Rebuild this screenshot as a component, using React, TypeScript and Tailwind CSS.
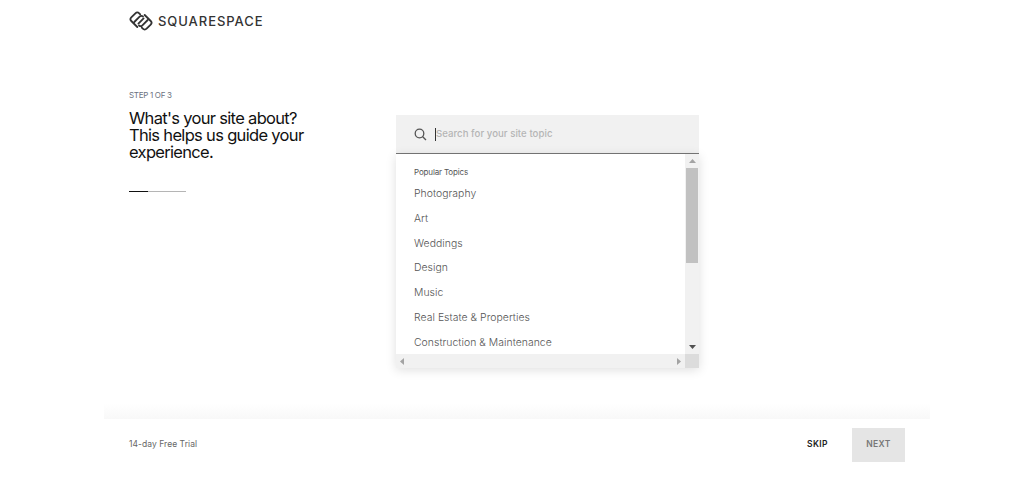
const topics = ["Photography", "Art", "Weddings", "Design", "Music", "Real Estate & Properties", "Construction & Maintenance"];

function LogoHalf() {
  return (
    <>
      <path d="M8.3 16 L2.3 10 C1.2 8.9 1.2 7.5 2.3 6.4 L6.4 2.3 C7.6 1.1 9 1.1 10.2 2.3 L11.2 3.3" />
      <path d="M5.3 11 L10.6 5.7 C11.6 4.7 12.9 4.6 14 5.5" />
    </>
  );
}

function Logo() {
  return (
    <svg width="24" height="20" viewBox="0 0 24 20" fill="none" stroke="#333333" strokeWidth="1.8" strokeLinecap="round" strokeLinejoin="round">
      <LogoHalf />
      <g transform="rotate(180 12 10)">
        <LogoHalf />
      </g>
      <path d="M9.4 12.6 L14.6 7.4" />
    </svg>
  );
}

export default function App() {
  return (
    <div className="w-[1032px] h-[495px] bg-white overflow-hidden font-['Inter',sans-serif]">
      <div className="ml-[104px] w-[826px] h-full flex flex-col">
        <header className="h-[44px] shrink-0 pl-[25px] pt-[11px] flex items-start gap-[5px]">
          <Logo />
          <span className="text-[13px] leading-[20px] font-medium tracking-[0.95px] text-[#333]">SQUARESPACE</span>
        </header>

        <main className="h-[360px] shrink-0 flex">
          <section className="w-[292px] pl-[25px] pt-[45px]">
            <p className="text-[8px] leading-[12px] text-[#6b7280] tracking-[-0.3px]">STEP 1 OF 3</p>
            <h1 className="mt-[9px] w-[190px] text-[16.5px] leading-[17px] text-[#111] tracking-[-0.68px]">
              What's your site about? This helps us guide your experience.
            </h1>
            <div className="mt-[30px] flex w-[57px] h-px">
              <div className="w-[19px] bg-[#111]" />
              <div className="w-[38px] bg-[#b5b5b5]" />
            </div>
          </section>

          <section className="w-[303px] mt-[71px]">
            <div className="h-[39px] bg-[#f1f1f1] border-b border-[#777] pl-[18px] flex items-center">
              <svg width="13" height="13" viewBox="0 0 13 13" fill="none" stroke="#555" strokeWidth="1.3">
                <circle cx="5.5" cy="5.5" r="4.3" />
                <path d="M8.7 8.7 L12 12" />
              </svg>
              <span className="ml-[8px] w-px h-[13px] bg-[#333]" />
              <span className="text-[9.6px] font-medium text-[#b5b5b5] tracking-[0.05px]">Search for your site topic</span>
            </div>
            <div className="h-[214px] flex flex-col shadow-[0_2px_10px_rgba(0,0,0,0.13)] bg-white">
              <div className="flex-1 flex min-h-0">
                <div className="w-[289px] pl-[18px] pt-[12px] overflow-hidden">
                  <p className="text-[8px] leading-[12px] text-[#555] tracking-[-0.15px]">Popular Topics</p>
                  <ul className="mt-[4px]">
                    {topics.map((t) => (
                      <li key={t} className="h-[24.75px] flex items-center pb-[1px] text-[10.4px] font-light text-[#555] tracking-[0.05px]">{t}</li>
                    ))}
                  </ul>
                </div>
                <div className="w-[14px] bg-[#f1f1f1] flex flex-col items-center">
                  <div className="h-[14px] shrink-0 flex items-center justify-center">
                    <svg width="7" height="4" viewBox="0 0 7 4"><path d="M3.5 0 L7 4 H0 Z" fill="#a3a3a3" /></svg>
                  </div>
                  <div className="w-[12px] h-[95px] bg-[#c1c1c1]" />
                  <div className="flex-1" />
                  <div className="h-[14px] shrink-0 flex items-center justify-center">
                    <svg width="7" height="4" viewBox="0 0 7 4"><path d="M0 0 H7 L3.5 4 Z" fill="#505050" /></svg>
                  </div>
                </div>
              </div>
              <div className="h-[14px] shrink-0 flex">
                <div className="w-[289px] bg-[#f1f1f1] flex items-center justify-between px-[4px]">
                  <svg width="4" height="7" viewBox="0 0 4 7"><path d="M4 0 V7 L0 3.5 Z" fill="#a3a3a3" /></svg>
                  <svg width="4" height="7" viewBox="0 0 4 7"><path d="M0 0 V7 L4 3.5 Z" fill="#a3a3a3" /></svg>
                </div>
                <div className="w-[14px] bg-[#dcdcdc]" />
              </div>
            </div>
          </section>
        </main>

        <footer className="shrink-0">
          <div className="h-[15px] bg-gradient-to-b from-white to-[#f8f8f8]" />
          <div className="h-[52px] px-[25px] py-[9px] flex items-center justify-between">
            <span className="text-[8.5px] leading-[10px] -mt-[2px] text-[#666] tracking-[0.05px]">14-day Free Trial</span>
            <div className="flex items-center gap-[24px]">
              <button className="text-[8.5px] leading-[10px] -mt-[2px] font-semibold text-[#222] tracking-[0.4px]">SKIP</button>
              <button className="w-[53px] h-[34px] pb-[1px] bg-[#e5e5e5] text-[8.5px] font-semibold text-[#777] tracking-[0.4px]">NEXT</button>
            </div>
          </div>
        </footer>
      </div>
    </div>
  );
}
